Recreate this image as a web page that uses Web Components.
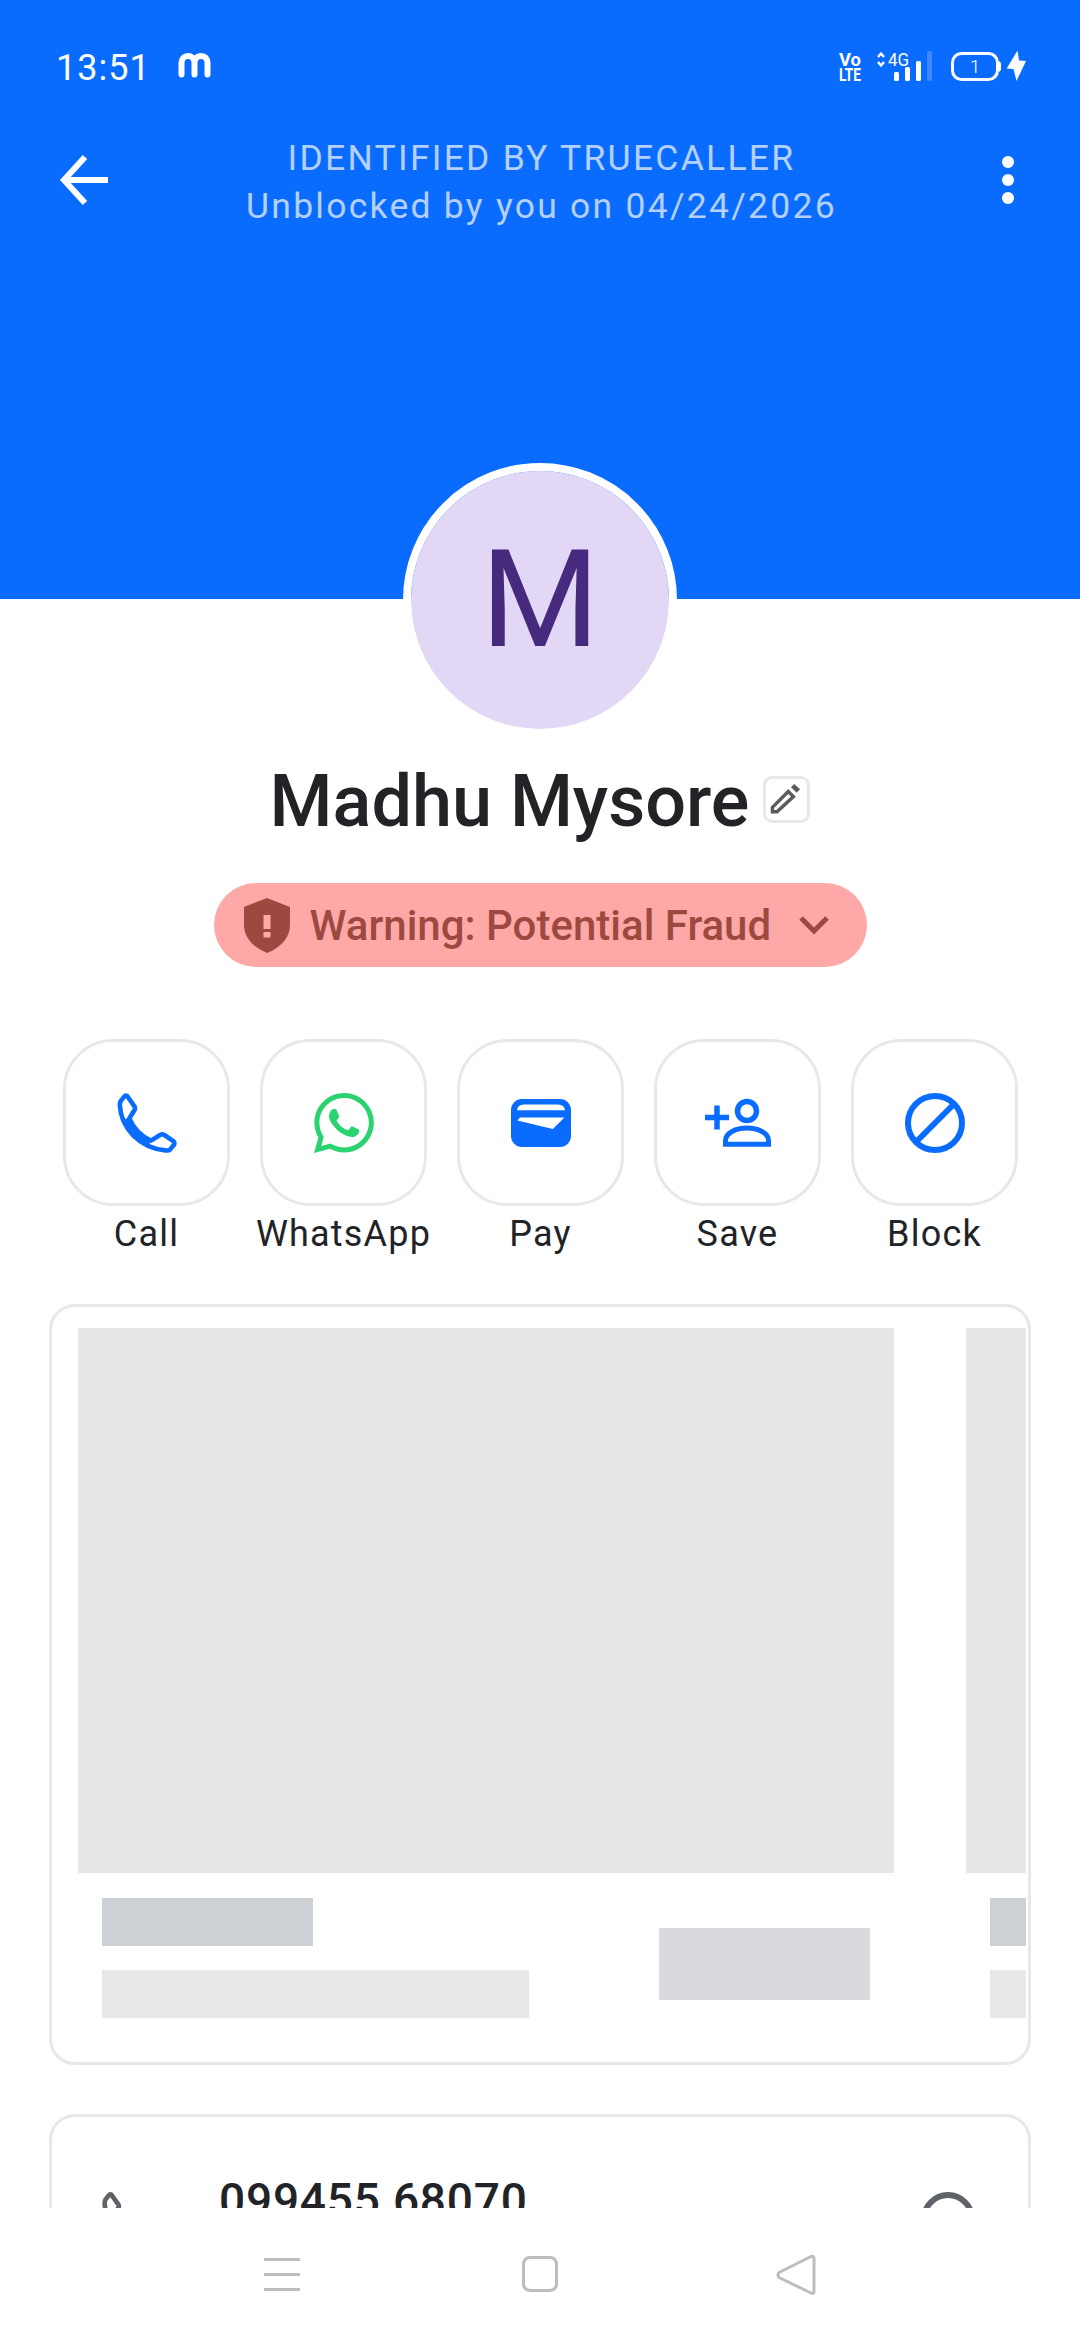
<!DOCTYPE html>
<html>
<head>
<meta charset="utf-8">
<style>
  html, body { margin: 0; padding: 0; background: #fff; }
  body { font-family: Roboto, "Noto Sans", sans-serif; color: #212327; }
</style>
</head>
<body>
<caller-screen>
  <caller-header>
    <span slot="time">13:51</span>
    <span slot="line1">IDENTIFIED BY TRUECALLER</span>
    <span slot="line2">Unblocked by you on 04/24/2026</span>
  </caller-header>
  <caller-avatar>M</caller-avatar>
  <caller-name>Madhu Mysore</caller-name>
  <fraud-pill>Warning: Potential Fraud</fraud-pill>
  <action-row>
    <action-button icon="call">Call</action-button>
    <action-button icon="whatsapp">WhatsApp</action-button>
    <action-button icon="pay">Pay</action-button>
    <action-button icon="save">Save</action-button>
    <action-button icon="block">Block</action-button>
  </action-row>
  <skeleton-card></skeleton-card>
  <number-card>099455 68070</number-card>
  <nav-bar slot="nav"></nav-bar>
</caller-screen>

<script>
const CALL_PATH = 'M10 2.8 L17.6 13.6 Q18.6 15.4 17.4 17.2 L12.4 25.2 C16 35 24.5 43.5 34 47.6 L43.4 41.8 Q45.4 40.8 47.4 42 L56.4 48.2 Q58 49.8 57 51.8 L53.2 56.4 Q51.6 57.8 48.6 57.4 C22 54.6 4 35 2.8 12 Q2.8 9.4 4 7.6 L7.4 3.4 Q8.8 2.2 10 2.8 Z';
const CALL_BAND = 'M8 26 C11 35 20 45 33 49.5';

const ICONS = {
  call: `<svg width="60" height="60" viewBox="0 0 60 60"><path d="${CALL_PATH}" fill="none" stroke="#0A6BFF" stroke-width="4.6" stroke-linejoin="round"/><path d="${CALL_BAND}" fill="none" stroke="#0A6BFF" stroke-width="5.5"/></svg>`,
  whatsapp: `<svg width="60" height="60" viewBox="0 0 24 24"><path fill="#2AD36F" d="M17.472 14.382c-.297-.149-1.758-.867-2.03-.967-.273-.099-.471-.148-.67.15-.197.297-.767.966-.94 1.164-.173.199-.347.223-.644.075-.297-.15-1.255-.463-2.39-1.475-.883-.788-1.48-1.761-1.653-2.059-.173-.297-.018-.458.13-.606.134-.133.298-.347.446-.52.149-.174.198-.298.298-.497.099-.198.05-.371-.025-.52-.075-.149-.669-1.612-.916-2.207-.242-.579-.487-.5-.669-.51-.173-.008-.371-.01-.57-.01-.198 0-.52.074-.792.372-.272.297-1.04 1.016-1.04 2.479 0 1.462 1.065 2.875 1.213 3.074.149.198 2.096 3.2 5.077 4.487.709.306 1.262.489 1.694.625.712.227 1.36.195 1.871.118.571-.085 1.758-.719 2.006-1.413.248-.694.248-1.289.173-1.413-.074-.124-.272-.198-.57-.347m-5.421 7.403h-.004a9.87 9.87 0 01-5.031-1.378l-.361-.214-3.741.982.998-3.648-.235-.374a9.86 9.86 0 01-1.51-5.26c.001-5.45 4.436-9.884 9.888-9.884 2.64 0 5.122 1.03 6.988 2.898a9.825 9.825 0 012.893 6.994c-.003 5.45-4.437 9.884-9.885 9.884m8.413-18.297A11.815 11.815 0 0012.05 0C5.495 0 .16 5.335.157 11.892c0 2.096.547 4.142 1.588 5.945L.057 24l6.305-1.654a11.882 11.882 0 005.683 1.448h.005c6.554 0 11.89-5.335 11.893-11.893a11.821 11.821 0 00-3.48-8.413z"/></svg>`,
  pay: `<svg width="60" height="60" viewBox="0 0 60 60"><rect x="0" y="6" width="60" height="48" rx="11" fill="#0A6BFF"/><path d="M6 17.2 Q6.6 11.6 13 11.4 H47 Q53.4 11.6 54 17.2 Z" fill="#fff"/><path d="M6.4 27.4 L9 24.4 H53.4 L41.8 36 Z" fill="#fff"/></svg>`,
  save: `<svg width="66" height="60" viewBox="0 0 66 60"><path d="M0 24.5 H24 M12 12.5 V36.5" fill="none" stroke="#0A6BFF" stroke-width="5.5"/><circle cx="42" cy="18" r="9.5" fill="none" stroke="#0A6BFF" stroke-width="5.5"/><path d="M20.5 51.2 V47.5 C20.5 40 31 35 42 35 C53 35 63.5 40 63.5 47.5 V51.2 Z" fill="none" stroke="#0A6BFF" stroke-width="5"/></svg>`,
  block: `<svg width="60" height="60" viewBox="0 0 60 60"><circle cx="30" cy="30" r="27" fill="none" stroke="#0A6BFF" stroke-width="6"/><path d="M11 49 L49 11" stroke="#0A6BFF" stroke-width="6"/></svg>`
};

class CallerScreen extends HTMLElement {
  constructor() {
    super();
    this.attachShadow({ mode: 'open' }).innerHTML = `
      <style>
        :host { display: flex; flex-direction: column; width: 1080px; height: 2340px; overflow: hidden; background: #fff; }
        .scroll { height: 2208px; overflow: hidden; display: flex; flex-direction: column; flex: none; }
      </style>
      <div class="scroll"><slot></slot></div>
      <slot name="nav"></slot>`;
  }
}

class CallerHeader extends HTMLElement {
  constructor() {
    super();
    this.attachShadow({ mode: 'open' }).innerHTML = `
      <style>
        :host { display: block; height: 599px; background: #0A6BFF; flex: none; }
        .status { display: flex; align-items: flex-start; height: 48px; padding: 48px 0 0 56px; color: #fff; }
        .time { font-size: 36px; line-height: 41px; letter-spacing: 1px; width: 122px; }
        .m { margin-top: 4px; }
        .sys { margin-left: auto; margin-right: 49px; margin-top: 0; }
        .sys text { font-family: Roboto, sans-serif; fill: #fff; }
        .bar { display: grid; grid-template-columns: 1fr auto 1fr; padding-top: 38px; }
        .back { margin: 20px 0 0 58px; }
        .title { text-align: center; color: #B3D0FF; font-size: 35.5px; line-height: 48px; letter-spacing: 2.25px; white-space: nowrap; padding-left: 3px; }
        .dots { justify-self: end; margin: 22px 66px 0 0; display: flex; flex-direction: column; gap: 6px; }
        .dots i { display: block; width: 12px; height: 12px; border-radius: 50%; background: #fff; }
      </style>
      <div class="status">
        <div class="time"><slot name="time"></slot></div>
        <svg class="m" width="34" height="26" viewBox="0 0 34 26"><path d="M3.5 22.5 V11 C3.5 6.5 6.5 4 10 4 C14 4 16.5 7 16.5 11 V22.5 M16.5 11 C16.5 7 19 4 23 4 C27 4 29.5 6.5 29.5 11 V22.5" fill="none" stroke="#fff" stroke-width="6" stroke-linecap="round"/></svg>
        <svg class="sys" width="195" height="36" viewBox="836 48 195 36">
          <text x="839" y="66" font-size="18.5" font-weight="700" textLength="22" lengthAdjust="spacingAndGlyphs">Vo</text>
          <text x="839" y="80.7" font-size="18" font-weight="700" textLength="22" lengthAdjust="spacingAndGlyphs">LTE</text>
          <path d="M878 57 L881 53.5 L884 57 M878 62 L881 65.5 L884 62" fill="none" stroke="#fff" stroke-width="2.4"/>
          <text x="888" y="66" font-size="18.5" textLength="21" lengthAdjust="spacingAndGlyphs">4G</text>
          <rect x="894" y="72" width="5" height="9" rx="1.5" fill="#fff"/>
          <rect x="905" y="67" width="5" height="14" rx="1.5" fill="#fff"/>
          <rect x="916" y="61" width="5" height="20" rx="1.5" fill="#fff"/>
          <rect x="927" y="51" width="5" height="30" rx="1.5" fill="#3F86FF"/>
          <rect x="952.5" y="53.5" width="45" height="26" rx="9" fill="none" stroke="#fff" stroke-width="3"/>
          <path d="M999 61 Q1001 62 1001 64 V69 Q1001 71 999 72 Z" fill="#fff"/>
          <text x="975" y="73" font-size="19" font-weight="300" text-anchor="middle">1</text>
          <path d="M1017.5 50.5 L1006.7 68.5 L1013.5 69 L1016.5 81 L1026 61 L1019 60.5 Z" fill="#fff"/>
        </svg>
      </div>
      <div class="bar">
        <svg class="back" width="52" height="52" viewBox="0 0 52 52"><path d="M7 26 H50 M27 3 L6 26 L27 49" fill="none" stroke="#fff" stroke-width="6"/></svg>
        <div class="title"><slot name="line1"></slot><br><slot name="line2"></slot></div>
        <div class="dots"><i></i><i></i><i></i></div>
      </div>`;
  }
}

class CallerAvatar extends HTMLElement {
  constructor() {
    super();
    this.attachShadow({ mode: 'open' }).innerHTML = `
      <style>
        :host { display: flex; align-self: center; align-items: center; justify-content: center; flex: none; width: 258px; height: 258px; margin-top: -136px; border: 8px solid #fff; border-radius: 50%; background: #E2D8F6; background-clip: padding-box; color: #452A7D; font-size: 136px; line-height: 1; }
      </style>
      <slot></slot>`;
  }
}

class CallerName extends HTMLElement {
  constructor() {
    super();
    this.attachShadow({ mode: 'open' }).innerHTML = `
      <style>
        :host { display: flex; align-self: center; align-items: flex-start; gap: 14px; margin-top: 23px; flex: none; font-size: 72px; line-height: 84px; font-weight: 500; color: #212327; white-space: nowrap; }
        .edit { box-sizing: border-box; width: 47px; height: 47px; margin-top: 16px; border: 3px solid #E8E8E8; border-radius: 9px; }
        .edit svg { display: block; }
      </style>
      <slot></slot>
      <div class="edit">
        <svg width="41" height="41" viewBox="766 779 41 41"><path d="M772.4 807.4 L788.3 791.5 L793.4 796.6 L777 811.7 H772.4 Z" fill="none" stroke="#5C5C5C" stroke-width="3.4"/><path d="M791 787.3 L794.3 784 L800 789.3 L796.7 792.7 Z" fill="#5C5C5C"/></svg>
      </div>`;
  }
}

class FraudPill extends HTMLElement {
  constructor() {
    super();
    this.attachShadow({ mode: 'open' }).innerHTML = `
      <style>
        :host { display: flex; align-self: center; align-items: center; flex: none; box-sizing: border-box; width: 653px; height: 84px; margin-top: 39px; padding-left: 30px; border-radius: 42px; background: #FFA8A8; color: #9C4A40; font-size: 42px; font-weight: 500; white-space: nowrap; }
        .shield { margin-right: 20px; }
        .chev { margin-left: 28px; }
      </style>
      <svg class="shield" width="46" height="55" viewBox="0 0 46 55"><path d="M23 0 L46 9 V27 C46 40 36 50 23 55 C10 50 0 40 0 27 V9 Z" fill="#9C4A40"/><rect x="19.5" y="17" width="7" height="14" fill="#FFA8A8"/><rect x="19.5" y="34" width="7" height="5.5" fill="#FFA8A8"/></svg>
      <slot></slot>
      <svg class="chev" width="30" height="20" viewBox="0 0 30 20"><path d="M2 3 L15 16 L28 3" fill="none" stroke="#9C4A40" stroke-width="5"/></svg>`;
  }
}

class ActionRow extends HTMLElement {
  constructor() {
    super();
    this.attachShadow({ mode: 'open' }).innerHTML = `
      <style>
        :host { display: flex; gap: 30px; flex: none; margin-top: 72px; padding-left: 63px; }
      </style>
      <slot></slot>`;
  }
}

class ActionButton extends HTMLElement {
  constructor() {
    super();
    const icon = ICONS[this.getAttribute('icon')] || '';
    this.attachShadow({ mode: 'open' }).innerHTML = `
      <style>
        :host { display: flex; flex-direction: column; align-items: center; width: 167px; flex: none; }
        .box { box-sizing: border-box; width: 167px; height: 167px; border: 3px solid #E7E8EA; border-radius: 50px; display: flex; align-items: center; justify-content: center; }
        .box svg { display: block; }
        .label { margin-top: 7px; font-size: 36px; line-height: 42px; letter-spacing: 1.2px; color: #212327; white-space: nowrap; }
      </style>
      <div class="box">${icon}</div>
      <div class="label"><slot></slot></div>`;
  }
}

class SkeletonCard extends HTMLElement {
  constructor() {
    super();
    const slide = `
      <div class="slide">
        <div class="img"></div>
        <div class="row">
          <div class="col"><div class="b1"></div><div class="b2"></div></div>
          <div class="b3"></div>
        </div>
      </div>`;
    this.attachShadow({ mode: 'open' }).innerHTML = `
      <style>
        :host { display: block; box-sizing: border-box; flex: none; width: 982px; height: 761px; margin: 49px 0 0 49px; padding: 21px 2px 0 26px; border: 3px solid #E7E8EA; border-radius: 26px; }
        .track { display: flex; gap: 72px; overflow: hidden; }
        .slide { flex: none; width: 816px; }
        .img { height: 545px; background: #E6E7E9; }
        .row { display: flex; padding: 25px 24px 0; }
        .col { width: 427px; display: flex; flex-direction: column; gap: 24px; }
        .b1 { width: 211px; height: 48px; background: #CDD0D5; }
        .b2 { width: 427px; height: 48px; background: #E7E8EA; }
        .b3 { width: 211px; height: 72px; margin: 30px 0 0 130px; background: #D9DADE; }
      </style>
      <div class="track">${slide}${slide}</div>`;
  }
}

class NumberCard extends HTMLElement {
  constructor() {
    super();
    this.attachShadow({ mode: 'open' }).innerHTML = `
      <style>
        :host { display: flex; align-items: flex-start; box-sizing: border-box; flex: none; width: 982px; height: 240px; margin: 49px 0 0 49px; padding: 52px 53px 0 50px; border: 3px solid #E7E8EA; border-radius: 26px; font-size: 46px; line-height: 54px; font-weight: 500; letter-spacing: .8px; color: #212327; }
        .ph { margin-top: 23px; }
        .num { margin: 4px 0 0 61px; white-space: nowrap; }
        .ring { margin: 23px 0 0 auto; }
      </style>
      <svg class="ph" width="56" height="56" viewBox="0 0 60 60"><path d="${CALL_PATH}" fill="none" stroke="#5F6368" stroke-width="5" stroke-linejoin="round"/></svg>
      <div class="num"><slot></slot></div>
      <svg class="ring" width="54" height="54" viewBox="0 0 54 54"><circle cx="27" cy="27" r="24" fill="none" stroke="#5F6368" stroke-width="6"/></svg>`;
  }
}

class NavBar extends HTMLElement {
  constructor() {
    super();
    this.attachShadow({ mode: 'open' }).innerHTML = `
      <style>
        :host { display: flex; align-items: flex-start; height: 132px; flex: none; padding: 46px 0 0 264px; background: #fff; }
        .menu { display: flex; flex-direction: column; gap: 12px; width: 36px; margin-top: 4px; }
        .menu i { display: block; height: 3px; background: #BDBDBD; }
        .home { box-sizing: border-box; width: 36px; height: 36px; margin: 2px 0 0 222px; border: 3.5px solid #BDBDBD; border-radius: 8px; }
        .back { margin-left: 218px; }
      </style>
      <div class="menu"><i></i><i></i><i></i></div>
      <div class="home"></div>
      <svg class="back" width="40" height="42" viewBox="0 0 40 42"><path d="M35 2.5 Q38 1.5 38 4.5 V37.5 Q38 40.5 35 39 L3 23.5 Q1 21 3 18.5 Z" fill="none" stroke="#BDBDBD" stroke-width="3" stroke-linejoin="round"/></svg>`;
  }
}

customElements.define('caller-screen', CallerScreen);
customElements.define('caller-header', CallerHeader);
customElements.define('caller-avatar', CallerAvatar);
customElements.define('caller-name', CallerName);
customElements.define('fraud-pill', FraudPill);
customElements.define('action-row', ActionRow);
customElements.define('action-button', ActionButton);
customElements.define('skeleton-card', SkeletonCard);
customElements.define('number-card', NumberCard);
customElements.define('nav-bar', NavBar);
</script>
</body>
</html>
